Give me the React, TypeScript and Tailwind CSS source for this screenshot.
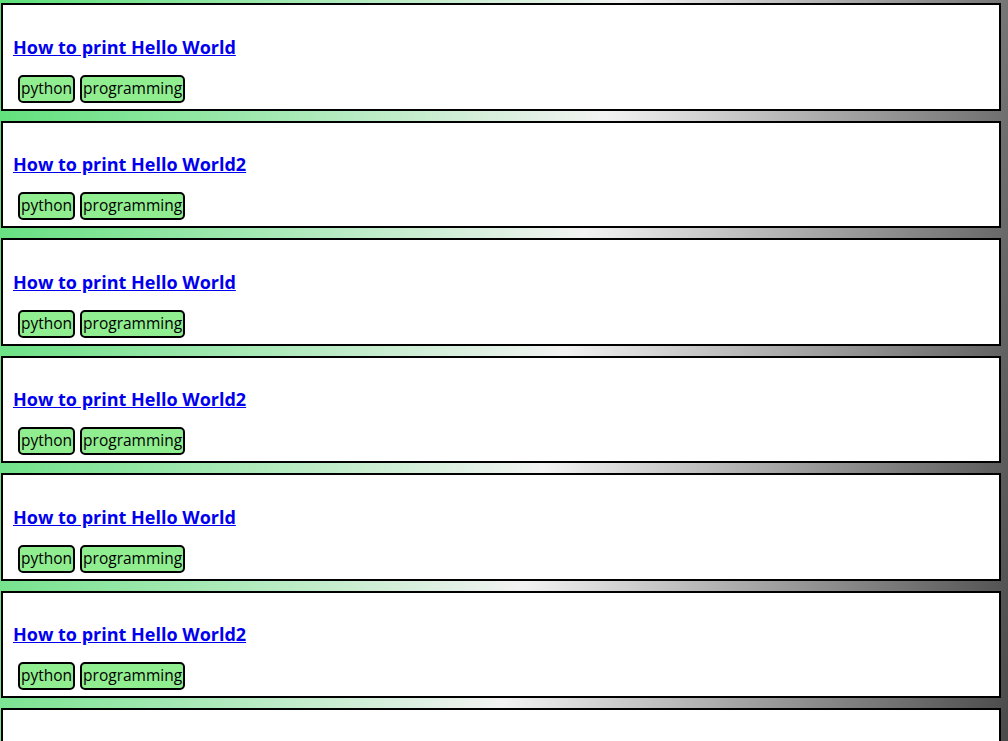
const posts = [
  { title: "How to print Hello World", tags: ["python", "programming"] },
  { title: "How to print Hello World2", tags: ["python", "programming"] },
  { title: "How to print Hello World", tags: ["python", "programming"] },
  { title: "How to print Hello World2", tags: ["python", "programming"] },
  { title: "How to print Hello World", tags: ["python", "programming"] },
  { title: "How to print Hello World2", tags: ["python", "programming"] },
  { title: "How to print Hello World", tags: ["python", "programming"] },
];

function PostCard({ title, tags }: { title: string; tags: string[] }) {
  return (
    <div className="shrink-0 ml-[1px] w-[1000px] h-[107.5px] bg-white border-2 border-black px-[10px] pt-[10px]">
      <h3 className="mt-[19.5px] text-[18px] leading-[25px] font-bold">
        <a href="#" className="text-[#0000ee] underline">
          {title}
        </a>
      </h3>
      <div className="mt-[15px] flex gap-[5px] pl-[5px]">
        {tags.map((tag) => (
          <span
            key={tag}
            className="h-[28px] px-[1px] flex items-center bg-[#90ee90] border-2 border-black rounded-[5px] text-[15.5px] text-black"
          >
            {tag}
          </span>
        ))}
      </div>
    </div>
  );
}

export default function App() {
  return (
    <div
      className="h-[741px] overflow-hidden pt-[3px] flex flex-col gap-[10px] bg-[linear-gradient(100deg,#5ee07a_0%,#f2f2f2_55%,#4a4a4a_100%)]"
      style={{ fontFamily: '"Open Sans", "Noto Sans", sans-serif' }}
    >
      {posts.map((post, i) => (
        <PostCard key={i} title={post.title} tags={post.tags} />
      ))}
    </div>
  );
}
